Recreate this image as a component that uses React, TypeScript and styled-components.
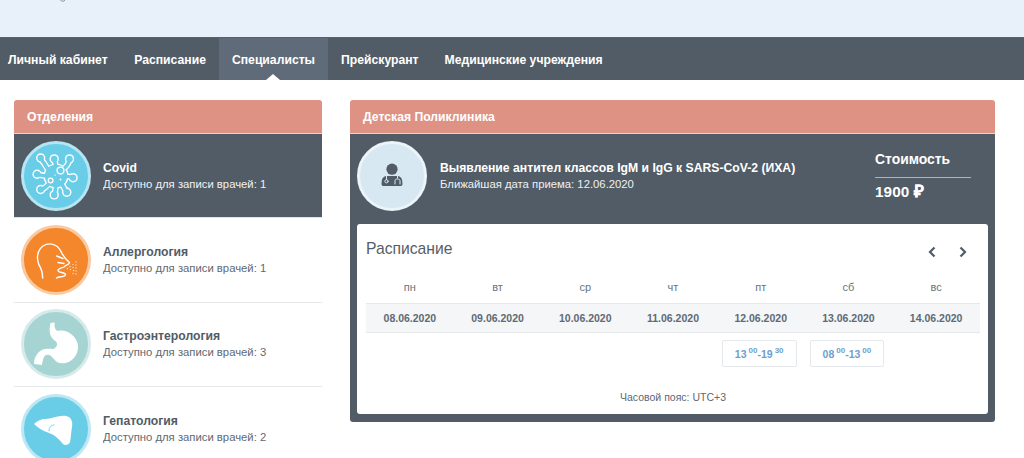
import React from "react";
import styled, { createGlobalStyle } from "styled-components";

const Global = createGlobalStyle`
  html, body { margin: 0; padding: 0; background: #fff; }
  body { font-family: "Liberation Sans", Arial, sans-serif; color: #525c66; }
`;

const Page = styled.div`
  width: 1024px;
  height: 458px;
  overflow: hidden;
`;

const TopBand = styled.header`
  height: 37px;
  background: #e8f0fa;
  display: flex;
  align-items: flex-start;
  padding-left: 60px;
`;

const CutGlyph = styled.svg`
  width: 6px;
  height: 2px;
  display: block;
`;

const Nav = styled.nav`
  height: 43px;
  background: #525c66;
  display: flex;
  box-sizing: border-box;
  border-top: 1px solid #58626d;
`;

const Tab = styled.a<{ $active?: boolean }>`
  position: relative;
  display: flex;
  align-items: center;
  padding: 1px 13px 0;
  font-size: 12.2px;
  font-weight: 700;
  color: #fff;
  background: ${(p) => (p.$active ? "#5f6b78" : "transparent")};
  &:first-child { padding-left: 8px; padding-right: 13.6px; }
  ${(p) =>
    p.$active
      ? `&::after {
          content: "";
          position: absolute;
          left: 50%;
          bottom: 0;
          margin-left: -7px;
          border: 7px solid transparent;
          border-top: 0;
          border-bottom: 6px solid #fff;
        }`
      : ""}
`;

const Main = styled.main`
  display: grid;
  grid-template-columns: 308px 645px;
  gap: 28px;
  padding: 20px 14px 0;
  align-items: start;
`;

const Panel = styled.section`
  min-width: 0;
`;

const PanelHeader = styled.div`
  height: 34px;
  box-sizing: border-box;
  background: #de9284;
  border-radius: 3px 3px 0 0;
  border-bottom: 1px solid #d9d9d9;
  display: flex;
  align-items: center;
  padding: 0 13px;
  font-size: 12.2px;
  font-weight: 700;
  color: #fff;
`;

const Dept = styled.div<{ $active?: boolean }>`
  height: 84.4px;
  box-sizing: border-box;
  display: flex;
  align-items: center;
  gap: 12px;
  padding: 0 7px;
  background: ${(p) => (p.$active ? "#525c66" : "#fff")};
  border-bottom: 1px solid ${(p) => (p.$active ? "#dfe3e6" : "#e6e8ea")};
  color: ${(p) => (p.$active ? "#fff" : "#525c66")};
`;

const Badge = styled.div<{ $fill: string; $ring: string }>`
  width: 70px;
  height: 70px;
  flex: none;
  box-sizing: border-box;
  border-radius: 50%;
  background: ${(p) => p.$fill};
  border: 3px solid ${(p) => p.$ring};
  overflow: hidden;
  display: flex;
  align-items: center;
  justify-content: center;
`;

const BadgeArt = styled.svg`
  width: 64px;
  height: 64px;
  flex: none;
  display: block;
`;

const DeptText = styled.div`
  display: flex;
  flex-direction: column;
  gap: 2px;
`;

const DeptName = styled.div`
  font-size: 12.2px;
  font-weight: 700;
  line-height: 14px;
`;

const DeptInfo = styled.div`
  font-size: 11.3px;
  line-height: 14px;
  opacity: 0.92;
`;

const ServiceBox = styled.div`
  background: #525c66;
  border-radius: 0 0 3px 3px;
  padding: 7px 7px 8px;
`;

const ServiceRow = styled.div`
  height: 70px;
  display: flex;
  align-items: center;
  gap: 13px;
  margin-bottom: 13px;
  color: #fff;
`;

const ServiceText = styled.div`
  flex: 1;
  display: flex;
  flex-direction: column;
  gap: 2px;
`;

const ServiceName = styled.div`
  font-size: 12.2px;
  font-weight: 700;
  line-height: 14px;
`;

const ServiceDate = styled.div`
  font-size: 11.3px;
  line-height: 14px;
  color: #eef0f2;
`;

const Price = styled.div`
  width: 96px;
  margin-right: 17px;
  margin-bottom: 1px;
  font-weight: 700;
  color: #fff;
`;

const PriceLabel = styled.div`
  font-size: 13.9px;
  line-height: 16px;
  padding-bottom: 10px;
  border-bottom: 1px solid #aeb3b8;
  margin-bottom: 5px;
`;

const PriceValue = styled.div`
  font-size: 15.3px;
  line-height: 17px;
  letter-spacing: 0.1px;
`;

const Rouble = styled.span`
  font-size: 17px;
  -webkit-text-stroke: 0.3px #fff;
`;

const ScheduleCard = styled.div`
  background: #fff;
  border-radius: 3px;
  height: 190px;
  box-sizing: border-box;
  padding: 15px 8px 0 9px;
`;

const ScheduleHead = styled.div`
  display: flex;
  align-items: center;
  justify-content: space-between;
  height: 20px;
  margin-bottom: 12px;
`;

const ScheduleTitle = styled.h2`
  margin: 0;
  font-size: 15.7px;
  font-weight: 400;
  color: #555e68;
`;

const Arrows = styled.div`
  display: flex;
  gap: 21px;
  padding-right: 12px;
  margin-top: 6px;
`;

const Week = styled.div`
  display: grid;
  grid-template-columns: repeat(7, 1fr);
`;

const DayName = styled.div`
  height: 32px;
  display: flex;
  align-items: center;
  justify-content: center;
  font-size: 11px;
  color: #6a737c;
`;

const DateCell = styled.div`
  height: 30px;
  box-sizing: border-box;
  background: #f4f6f8;
  border-top: 1px solid #e6e9ec;
  border-bottom: 1px solid #e6e9ec;
  display: flex;
  align-items: center;
  justify-content: center;
  font-size: 10.5px;
  font-weight: 700;
  color: #606a74;
`;

const SlotCell = styled.div`
  padding: 7px 8px 0 5px;
  height: 35px;
  box-sizing: border-box;
`;

const Slot = styled.div`
  height: 27px;
  box-sizing: border-box;
  border: 1px solid #e6e9ec;
  border-radius: 2px;
  display: flex;
  align-items: center;
  justify-content: center;
  font-size: 10.5px;
  font-weight: 700;
  color: #6c9fd0;
  sup {
    font-size: 8px;
    line-height: 0;
    margin: 0 0 0 2px;
    position: relative;
    top: -3px;
  }
`;

const TimeZone = styled.div`
  margin-top: 22px;
  text-align: center;
  font-size: 10.5px;
  line-height: 14px;
  color: #5f6871;
`;

const VirusArt = () => {
  const arms = [
    "M35 35 C28 30 25 27 23 23 C22 20 19 19 19 16", "M35 35 C34 28 36 24 33 17", "M35 35 C40 29 46 26 48 22 C49 20 50 18 50 17",
    "M35 35 C42 36 48 34 54 37", "M35 35 C39 41 44 46 46 53", "M35 35 C34 42 36 48 33 55",
    "M35 35 C30 40 26 46 21 49 L18 50", "M35 35 C28 34 20 36 15 33",
  ];
  const ends: [number, number][] = [[18, 15], [33, 16], [50, 16], [54, 37], [47, 53], [33, 56], [18, 50], [14, 33]];
  return (
    <BadgeArt viewBox="3 3 64 64">
      <g transform="translate(35 35) scale(.9) translate(-35 -35)">
        <g fill="none" stroke="#fff" strokeWidth="6.8" strokeLinecap="round" strokeLinejoin="round">
          {arms.map((d) => <path key={d} d={d} />)}
        </g>
        <g fill="#fff">
          <circle cx="35" cy="35" r="14" />
          {ends.map(([x, y]) => <circle key={`${x}${y}`} cx={x} cy={y} r="5.2" />)}
        </g>
        <g fill="none" stroke="#69cde8" strokeWidth="4" strokeLinecap="round" strokeLinejoin="round">
          {arms.map((d) => <path key={d} d={d} />)}
        </g>
        <g fill="#69cde8">
          <circle cx="35" cy="35" r="12.4" />
          {ends.map(([x, y]) => <circle key={`${x}${y}`} cx={x} cy={y} r="3.6" />)}
        </g>
        <g fill="none" stroke="#fff" strokeWidth="1.5">
          <circle cx="40" cy="29" r="3.8" />
          <circle cx="29" cy="40" r="2.6" />
        </g>
        <g fill="#fff">
          <circle cx="40" cy="39" r="1.1" />
          <circle cx="34" cy="34" r="0.8" />
        </g>
      </g>
    </BadgeArt>
  );
};

const SneezeArt = () => {
  const dots: [number, number][] = [
    [55, 37], [52, 39.5], [55, 40], [49, 41.5], [52, 42.5], [55, 43], [46.5, 43.5],
    [49.5, 44.5], [52.5, 45.5], [55, 46], [52, 48.5], [55, 49],
  ];
  return (
    <BadgeArt viewBox="3 3 64 64">
      <path
        d="M21.7 53 C21.5 47 20 43 18 40 C15 33 16.5 25 22 21 C28 17 36 19 39.5 25.5 C41 29 43 33 48.5 37.5 C48.5 39.5 45.5 40 44 41 C44.5 42.5 37 43 37 45.5 C37 48 44 47 44.5 49.5 C44.5 52.5 38 51 35.5 53"
        fill="none" stroke="#fff" strokeWidth="1.4" strokeLinecap="round" strokeLinejoin="round"
      />
      <path d="M35.5 31 L42 33.5 M37 37.5 L43 38.5" stroke="#fff" strokeWidth="1.4" strokeLinecap="round" />
      <g fill="#fde3c8">
        {dots.map(([x, y]) => <circle key={`${x}-${y}`} cx={x} cy={y} r="0.65" />)}
      </g>
    </BadgeArt>
  );
};

const StomachArt = () => (
  <BadgeArt viewBox="3 3 64 64">
    <path
      fill="#fff"
      d="M29.5 14 L33.8 13.5 C33 18 34 21 37 22 C45 20 55 26 57 36 C58 48 48 56 39 54 C33 53 32 47 28 46 C24 45 22 48 21 56 L13 55 C13 47 18 41 24 40 C28 39 32 41 34 39 C37 36 37 34 33 31 C28 27 28 20 29.5 14 Z"
    />
  </BadgeArt>
);

const LiverArt = () => (
  <BadgeArt viewBox="3 3 64 64">
    <path
      fill="#fff"
      d="M13 30 C16 27 20 25 24 25 C31 25 38 21 45 22 C50 23 52 27 51 33 C50 38 50 44 49 48 C48 51 44 52 42 50 C38 45 34 41 28 39 C22 37 17 34 13 30 Z"
    />
    <path d="M28 37 C28 33 30 31 33 31" fill="none" stroke="#69cde8" strokeWidth="0.9" strokeLinecap="round" />
  </BadgeArt>
);

const DoctorArt = () => (
  <BadgeArt viewBox="3 3 64 64">
    <circle cx="35" cy="28.2" r="5.6" fill="#525c66" />
    <path
      fill="#525c66"
      d="M24.5 43 L24.8 39.5 C25 37 27 35.5 29 35 L41 35 C43 35.5 45 37 45.2 39.5 L45.5 43 C45.5 44.5 44.5 45 43.5 45 L26.5 45 C25.5 45 24.5 44.5 24.5 43 Z"
    />
    <g fill="none" stroke="#d8e8f2" strokeWidth="1" strokeLinecap="round">
      <path d="M29.5 34.5 L29.5 38.5" />
      <circle cx="29.5" cy="40.3" r="1.6" />
      <path d="M40.5 34.5 L40.5 37 M38 43 L38 39.5 C38 37.5 43 37.5 43 39.5 L43 43" />
    </g>
  </BadgeArt>
);

const Chevron = ({ dir }: { dir: "left" | "right" }) => (
  <svg width="10" height="12" viewBox="0 0 10 12">
    <path
      d={dir === "left" ? "M7.5 1.5 L3 6 L7.5 10.5" : "M2.5 1.5 L7 6 L2.5 10.5"}
      fill="none" stroke="#525c66" strokeWidth="2.2"
    />
  </svg>
);

const departments = [
  { name: "Covid", count: 1, fill: "#69cde8", ring: "#b7e6f2", art: <VirusArt />, active: true },
  { name: "Аллергология", count: 1, fill: "#f4862c", ring: "#f9c9a0", art: <SneezeArt /> },
  { name: "Гастроэнтерология", count: 3, fill: "#a6d4d2", ring: "#d5eaea", art: <StomachArt /> },
  { name: "Гепатология", count: 2, fill: "#69cde8", ring: "#bde8f3", art: <LiverArt /> },
];

const tabs = ["Личный кабинет", "Расписание", "Специалисты", "Прейскурант", "Медицинские учреждения"];
const days = [
  ["пн", "08.06.2020"], ["вт", "09.06.2020"], ["ср", "10.06.2020"], ["чт", "11.06.2020"],
  ["пт", "12.06.2020"], ["сб", "13.06.2020"], ["вс", "14.06.2020"],
];
const slots: Record<string, [string, string, string, string]> = {
  пт: ["13", "00", "19", "30"],
  сб: ["08", "00", "13", "00"],
};

export default function App() {
  return (
    <Page>
      <Global />
      <TopBand>
        <CutGlyph viewBox="0 0 6 2">
          <path d="M0.5 0 C1 1.6 4.5 1.6 5 0" fill="none" stroke="#8b929a" strokeWidth="1" />
        </CutGlyph>
      </TopBand>
      <Nav>
        {tabs.map((t) => <Tab key={t} $active={t === "Специалисты"}>{t}</Tab>)}
      </Nav>
      <Main>
        <Panel>
          <PanelHeader>Отделения</PanelHeader>
          {departments.map((d) => (
            <Dept key={d.name} $active={d.active}>
              <Badge $fill={d.fill} $ring={d.ring}>{d.art}</Badge>
              <DeptText>
                <DeptName>{d.name}</DeptName>
                <DeptInfo>Доступно для записи врачей: {d.count}</DeptInfo>
              </DeptText>
            </Dept>
          ))}
        </Panel>
        <Panel>
          <PanelHeader>Детская Поликлиника</PanelHeader>
          <ServiceBox>
            <ServiceRow>
              <Badge $fill="#d8e8f2" $ring="#ebf4f8"><DoctorArt /></Badge>
              <ServiceText>
                <ServiceName>Выявление антител классов IgM и IgG к SARS-CoV-2 (ИХА)</ServiceName>
                <ServiceDate>Ближайшая дата приема: 12.06.2020</ServiceDate>
              </ServiceText>
              <Price>
                <PriceLabel>Стоимость</PriceLabel>
                <PriceValue>1900 <Rouble>₽</Rouble></PriceValue>
              </Price>
            </ServiceRow>
            <ScheduleCard>
              <ScheduleHead>
                <ScheduleTitle>Расписание</ScheduleTitle>
                <Arrows>
                  <Chevron dir="left" />
                  <Chevron dir="right" />
                </Arrows>
              </ScheduleHead>
              <Week>
                {days.map(([d]) => <DayName key={d}>{d}</DayName>)}
                {days.map(([d, date]) => <DateCell key={d}>{date}</DateCell>)}
                {days.map(([d]) => {
                  const s = slots[d];
                  return (
                    <SlotCell key={d}>
                      {s && (
                        <Slot>
                          {s[0]}<sup>{s[1]}</sup>-{s[2]}<sup>{s[3]}</sup>
                        </Slot>
                      )}
                    </SlotCell>
                  );
                })}
              </Week>
              <TimeZone>Часовой пояс: UTC+3</TimeZone>
            </ScheduleCard>
          </ServiceBox>
        </Panel>
      </Main>
    </Page>
  );
}
